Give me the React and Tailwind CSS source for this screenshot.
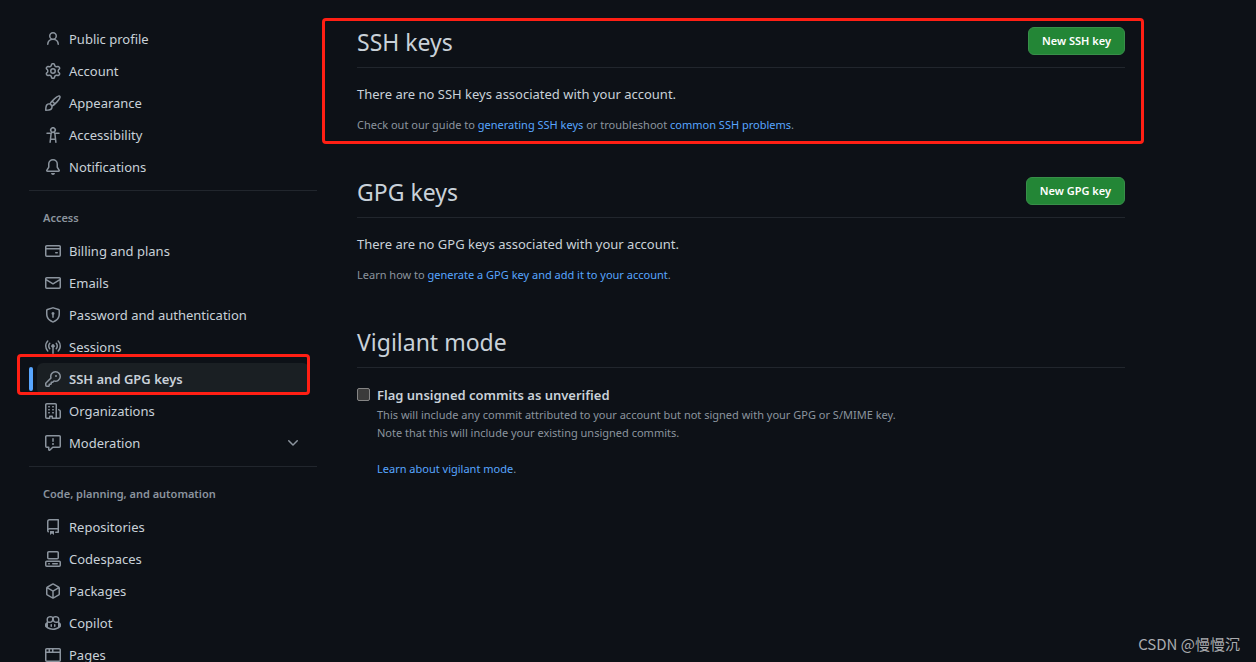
import { useState } from "react";

// 16px outline icons, keyed by name
const ICONS = {
  person:
    "M10.561 8.073a6.005 6.005 0 0 1 3.432 5.142.75.75 0 1 1-1.498.07 4.5 4.5 0 0 0-8.99 0 .75.75 0 0 1-1.498-.07 6.004 6.004 0 0 1 3.431-5.142 3.999 3.999 0 1 1 5.123 0ZM10.5 5a2.5 2.5 0 1 0-5 0 2.5 2.5 0 0 0 5 0Z",
  gear: "M8 0a8.2 8.2 0 0 1 .701.031C9.444.095 9.99.645 10.16 1.29l.288 1.107c.018.066.079.158.212.224.231.114.454.243.668.386.123.082.233.09.299.071l1.103-.303c.644-.176 1.392.021 1.82.63.27.385.506.792.704 1.218.315.675.111 1.422-.364 1.891l-.814.806c-.049.048-.098.147-.088.294.016.257.016.515 0 .772-.01.147.038.246.088.294l.814.806c.475.469.679 1.216.364 1.891a7.977 7.977 0 0 1-.704 1.217c-.428.61-1.176.807-1.82.63l-1.102-.302c-.067-.019-.177-.011-.3.071a5.909 5.909 0 0 1-.668.386c-.133.066-.194.158-.211.224l-.29 1.106c-.168.646-.715 1.196-1.458 1.26a8.006 8.006 0 0 1-1.402 0c-.743-.064-1.289-.614-1.458-1.26l-.289-1.106c-.018-.066-.079-.158-.212-.224a5.738 5.738 0 0 1-.668-.386c-.123-.082-.233-.09-.299-.071l-1.103.303c-.644.176-1.392-.021-1.82-.63a8.12 8.12 0 0 1-.704-1.218c-.315-.675-.111-1.422.363-1.891l.815-.806c.05-.048.098-.147.088-.294a6.214 6.214 0 0 1 0-.772c.01-.147-.038-.246-.088-.294l-.815-.806C.635 6.045.431 5.298.746 4.623a7.92 7.92 0 0 1 .704-1.217c.428-.61 1.176-.807 1.82-.63l1.102.302c.067.019.177.011.3-.071.214-.143.437-.272.668-.386.133-.066.194-.158.211-.224l.29-1.106C6.009.645 6.556.095 7.299.03 7.53.01 7.764 0 8 0Zm-.571 1.525c-.036.003-.108.036-.137.146l-.289 1.105c-.147.561-.549.967-.998 1.189-.173.086-.34.183-.5.29-.417.278-.97.423-1.529.27l-1.103-.303c-.109-.03-.175.016-.195.045-.22.312-.412.644-.573.99-.014.031-.021.11.059.19l.815.806c.411.406.562.957.53 1.456a4.709 4.709 0 0 0 0 .582c.032.499-.119 1.05-.53 1.456l-.815.806c-.081.08-.073.159-.059.19.162.346.353.677.573.989.02.03.085.076.195.046l1.102-.303c.56-.153 1.113-.008 1.53.27.161.107.328.204.501.29.447.222.85.629.997 1.189l.289 1.105c.029.109.101.143.137.146a6.6 6.6 0 0 0 1.142 0c.036-.003.108-.036.137-.146l.289-1.105c.147-.561.549-.967.998-1.189.173-.086.34-.183.5-.29.417-.278.97-.423 1.529-.27l1.103.303c.109.029.175-.016.195-.045.22-.313.411-.644.573-.99.014-.031.021-.11-.059-.19l-.815-.806c-.411-.406-.562-.957-.53-1.456a4.709 4.709 0 0 0 0-.582c-.032-.499.119-1.05.53-1.456l.815-.806c.081-.08.073-.159.059-.19a6.464 6.464 0 0 0-.573-.989c-.02-.03-.085-.076-.195-.046l-1.102.303c-.56.153-1.113.008-1.53-.27a4.44 4.44 0 0 0-.501-.29c-.447-.222-.85-.629-.997-1.189l-.289-1.105c-.029-.11-.101-.143-.137-.146a6.6 6.6 0 0 0-1.142 0ZM11 8a3 3 0 1 1-6 0 3 3 0 0 1 6 0ZM9.5 8a1.5 1.5 0 1 0-3.001.001A1.5 1.5 0 0 0 9.5 8Z",
  paintbrush:
    "M11.134 1.535c.7-.509 1.416-.942 2.076-1.155.649-.21 1.463-.267 2.069.34.603.601.568 1.411.368 2.07-.202.668-.624 1.39-1.125 2.096-1.011 1.424-2.496 2.987-3.775 4.249-1.098 1.084-2.132 1.839-3.04 2.3a3.744 3.744 0 0 1-1.055 3.217c-.431.431-1.065.691-1.657.861-.614.177-1.294.287-1.914.357A21.151 21.151 0 0 1 .797 16H.743A.75.75 0 0 1 0 15.257v-.054a21.25 21.25 0 0 1 .13-2.284c.067-.647.187-1.287.358-1.914.17-.591.43-1.226.86-1.657a3.746 3.746 0 0 1 3.227-1.054c.466-.893 1.225-1.907 2.314-2.982 1.271-1.255 2.833-2.75 4.245-3.777ZM1.62 13.089c-.051.464-.086.929-.104 1.395.466-.018.932-.053 1.396-.104a10.511 10.511 0 0 0 1.668-.309c.526-.151.856-.325 1.011-.48a2.25 2.25 0 1 0-3.182-3.182c-.155.155-.329.485-.48 1.01a10.515 10.515 0 0 0-.309 1.67Zm10.396-10.34c-1.224.89-2.605 2.189-3.822 3.384l1.718 1.718c1.21-1.205 2.51-2.597 3.387-3.833.47-.662.78-1.227.912-1.662.134-.444.032-.551.009-.575h-.001V1.78c-.014-.014-.113-.113-.548.027-.432.14-.995.462-1.655.942Zm-4.832 7.266-.001.001a9.859 9.859 0 0 0 1.63-1.142L7.155 7.216a9.7 9.7 0 0 0-1.161 1.607c.482.302.889.71 1.19 1.192Z",
  accessibility:
    "M9.923 5.302c.063.063.122.129.178.198H14A.75.75 0 0 1 14 7h-3.3l.578 5.163.362 2.997a.75.75 0 0 1-1.49.18L9.868 13H6.132l-.282 2.34a.75.75 0 0 1-1.49-.18l.362-2.997L5.3 7H2a.75.75 0 0 1 0-1.5h3.9a2.54 2.54 0 0 1 .176-.198 3 3 0 1 1 3.847 0ZM9.2 7.073h-.001a1.206 1.206 0 0 0-2.398 0L6.305 11.5h3.39ZM9.5 3a1.5 1.5 0 1 0-3.001.001A1.5 1.5 0 0 0 9.5 3Z",
  bell: "M8 16a2 2 0 0 0 1.985-1.75c.017-.137-.097-.25-.235-.25h-3.5c-.138 0-.252.113-.235.25A2 2 0 0 0 8 16ZM3 5a5 5 0 0 1 10 0v2.947c0 .05.015.098.042.139l1.703 2.555A1.519 1.519 0 0 1 13.482 13H2.518a1.516 1.516 0 0 1-1.263-2.36l1.703-2.554A.255.255 0 0 0 3 7.947Zm5-3.5A3.5 3.5 0 0 0 4.5 5v2.947c0 .346-.102.683-.294.97l-1.703 2.556a.017.017 0 0 0-.003.01l.001.006c0 .002.002.004.004.006l.006.004.007.001h10.964l.007-.001.006-.004.004-.006.001-.007a.017.017 0 0 0-.003-.01l-1.703-2.554a1.745 1.745 0 0 1-.294-.97V5A3.5 3.5 0 0 0 8 1.5Z",
  creditCard:
    "M10.75 9a.75.75 0 0 0 0 1.5h1.5a.75.75 0 0 0 0-1.5h-1.5ZM0 3.75C0 2.784.784 2 1.75 2h12.5c.966 0 1.75.784 1.75 1.75v8.5A1.75 1.75 0 0 1 14.25 14H1.75A1.75 1.75 0 0 1 0 12.25ZM14.5 6.5h-13v5.75c0 .138.112.25.25.25h12.5a.25.25 0 0 0 .25-.25Zm0-2.75a.25.25 0 0 0-.25-.25H1.75a.25.25 0 0 0-.25.25V5h13Z",
  mail: "M1.75 2h12.5c.966 0 1.75.784 1.75 1.75v8.5A1.75 1.75 0 0 1 14.25 14H1.75A1.75 1.75 0 0 1 0 12.25v-8.5C0 2.784.784 2 1.75 2ZM1.5 12.251c0 .138.112.25.25.25h12.5a.25.25 0 0 0 .25-.25V5.809L8.38 9.397a.75.75 0 0 1-.76 0L1.5 5.809v6.442Zm13-8.181v-.32a.25.25 0 0 0-.25-.25H1.75a.25.25 0 0 0-.25.25v.32L8 7.88Z",
  shieldLock:
    "m8.533.133 5.25 1.68A1.75 1.75 0 0 1 15 3.48V7c0 1.566-.32 3.182-1.303 4.682-.983 1.498-2.585 2.813-5.032 3.855a1.697 1.697 0 0 1-1.33 0c-2.447-1.042-4.049-2.357-5.032-3.855C1.32 10.182 1 8.566 1 7V3.48a1.75 1.75 0 0 1 1.217-1.667l5.25-1.68a1.748 1.748 0 0 1 1.066 0Zm-.61 1.429.001.001-5.25 1.68a.251.251 0 0 0-.174.237V7c0 1.36.275 2.666 1.057 3.859.784 1.194 2.121 2.342 4.366 3.298a.196.196 0 0 0 .154 0c2.245-.957 3.582-2.103 4.366-3.297C13.225 9.666 13.5 8.358 13.5 7V3.48a.25.25 0 0 0-.174-.238l-5.25-1.68a.25.25 0 0 0-.153 0ZM9.5 6.5c0 .536-.286 1.032-.75 1.3v2.45a.75.75 0 0 1-1.5 0V7.8A1.5 1.5 0 1 1 9.5 6.5Z",
  broadcast:
    "M8.75 8.582v5.668a.75.75 0 0 1-1.5 0V8.582a1.75 1.75 0 1 1 1.5 0Zm3.983-7.125a.75.75 0 0 1 1.06.026A7.976 7.976 0 0 1 16 7c0 2.139-.84 4.083-2.207 5.517a.75.75 0 1 1-1.086-1.034A6.474 6.474 0 0 0 14.5 7a6.474 6.474 0 0 0-1.793-4.483.75.75 0 0 1 .026-1.06Zm-9.466 0c.3.286.312.76.026 1.06A6.474 6.474 0 0 0 1.5 7a6.47 6.47 0 0 0 1.793 4.483.75.75 0 0 1-1.086 1.034A7.973 7.973 0 0 1 0 7c0-2.139.84-4.083 2.207-5.517a.75.75 0 0 1 1.06-.026Zm8.556 2.321A4.988 4.988 0 0 1 13 7a4.988 4.988 0 0 1-1.177 3.222.75.75 0 1 1-1.146-.967A3.487 3.487 0 0 0 11.5 7c0-.86-.309-1.645-.823-2.255a.75.75 0 0 1 1.146-.967Zm-6.492.958A3.48 3.48 0 0 0 4.5 7a3.48 3.48 0 0 0 .823 2.255.75.75 0 0 1-1.146.967A4.981 4.981 0 0 1 3 7a4.982 4.982 0 0 1 1.188-3.236.75.75 0 1 1 1.143.972Z",
  key: "M10.5 0a5.499 5.499 0 1 1-1.288 10.848l-.932.932a.749.749 0 0 1-.53.22H7v.75a.749.749 0 0 1-.22.53l-.5.5a.749.749 0 0 1-.53.22H5v.75a.749.749 0 0 1-.22.53l-.5.5a.749.749 0 0 1-.53.22h-2A1.75 1.75 0 0 1 0 14.25v-2c0-.199.079-.389.22-.53l4.932-4.932A5.5 5.5 0 0 1 10.5 0Zm-4 5.5c-.001.431.069.86.205 1.269a.75.75 0 0 1-.181.768L1.5 12.56v1.69c0 .138.112.25.25.25h1.69l.06-.06v-1.19a.75.75 0 0 1 .75-.75h1.19l.06-.06v-1.19a.75.75 0 0 1 .75-.75h1.19l1.023-1.025a.75.75 0 0 1 .768-.18A4 4 0 1 0 6.5 5.5ZM11 6a1 1 0 1 1 0-2 1 1 0 0 1 0 2Z",
  organization:
    "M1.75 16A1.75 1.75 0 0 1 0 14.25V1.75C0 .784.784 0 1.75 0h8.5C11.216 0 12 .784 12 1.75v12.5c0 .085-.006.168-.018.25h2.268a.25.25 0 0 0 .25-.25V8.285a.25.25 0 0 0-.111-.208l-1.055-.703a.749.749 0 1 1 .832-1.248l1.055.703c.487.325.779.871.779 1.456v5.965A1.75 1.75 0 0 1 14.25 16h-3.5a.766.766 0 0 1-.197-.026c-.099.017-.2.026-.303.026h-3a.75.75 0 0 1-.75-.75V14h-1v1.25a.75.75 0 0 1-.75.75Zm-.25-1.75c0 .138.112.25.25.25H4v-1.25a.75.75 0 0 1 .75-.75h2.5a.75.75 0 0 1 .75.75v1.25h2.25a.25.25 0 0 0 .25-.25V1.75a.25.25 0 0 0-.25-.25h-8.5a.25.25 0 0 0-.25.25ZM3.75 6h.5a.75.75 0 0 1 0 1.5h-.5a.75.75 0 0 1 0-1.5ZM3 3.75A.75.75 0 0 1 3.75 3h.5a.75.75 0 0 1 0 1.5h-.5A.75.75 0 0 1 3 3.75Zm4 3A.75.75 0 0 1 7.75 6h.5a.75.75 0 0 1 0 1.5h-.5A.75.75 0 0 1 7 6.75ZM7.75 3h.5a.75.75 0 0 1 0 1.5h-.5a.75.75 0 0 1 0-1.5ZM3 9.75A.75.75 0 0 1 3.75 9h.5a.75.75 0 0 1 0 1.5h-.5A.75.75 0 0 1 3 9.75ZM7.75 9h.5a.75.75 0 0 1 0 1.5h-.5a.75.75 0 0 1 0-1.5Z",
  report:
    "M0 1.75C0 .784.784 0 1.75 0h12.5C15.216 0 16 .784 16 1.75v9.5A1.75 1.75 0 0 1 14.25 13H8.06l-2.573 2.573A1.458 1.458 0 0 1 3 14.543V13H1.75A1.75 1.75 0 0 1 0 11.25Zm1.75-.25a.25.25 0 0 0-.25.25v9.5c0 .138.112.25.25.25h2a.75.75 0 0 1 .75.75v2.19l2.72-2.72a.749.749 0 0 1 .53-.22h6.5a.25.25 0 0 0 .25-.25v-9.5a.25.25 0 0 0-.25-.25Zm7 2.25v2.5a.75.75 0 0 1-1.5 0v-2.5a.75.75 0 0 1 1.5 0ZM9 9a1 1 0 1 1-2 0 1 1 0 0 1 2 0Z",
  repo: "M2 2.5A2.5 2.5 0 0 1 4.5 0h8.75a.75.75 0 0 1 .75.75v12.5a.75.75 0 0 1-.75.75h-2.5a.75.75 0 0 1 0-1.5h1.75v-2h-8a1 1 0 0 0-.714 1.7.75.75 0 1 1-1.072 1.05A2.495 2.495 0 0 1 2 11.5Zm10.5-1h-8a1 1 0 0 0-1 1v6.708A2.486 2.486 0 0 1 4.5 9h8ZM5 12.25a.25.25 0 0 1 .25-.25h3.5a.25.25 0 0 1 .25.25v3.25a.25.25 0 0 1-.4.2l-1.45-1.087a.249.249 0 0 0-.3 0L5.4 15.7a.25.25 0 0 1-.4-.2Z",
  codespaces:
    "M0 11.25c0-.966.784-1.75 1.75-1.75h12.5c.966 0 1.75.784 1.75 1.75v3A1.75 1.75 0 0 1 14.25 16H1.75A1.75 1.75 0 0 1 0 14.25Zm2-9.5C2 .784 2.784 0 3.75 0h8.5C13.216 0 14 .784 14 1.75v5a1.75 1.75 0 0 1-1.75 1.75h-8.5A1.75 1.75 0 0 1 2 6.75Zm1.75-.25a.25.25 0 0 0-.25.25v5c0 .138.112.25.25.25h8.5a.25.25 0 0 0 .25-.25v-5a.25.25 0 0 0-.25-.25Zm-2 9.5a.25.25 0 0 0-.25.25v3c0 .138.112.25.25.25h12.5a.25.25 0 0 0 .25-.25v-3a.25.25 0 0 0-.25-.25ZM7 12.75a.75.75 0 0 1 .75-.75h4.5a.75.75 0 0 1 0 1.5h-4.5a.75.75 0 0 1-.75-.75Zm-4 0a.75.75 0 0 1 .75-.75h.5a.75.75 0 0 1 0 1.5h-.5a.75.75 0 0 1-.75-.75Z",
  package:
    "m8.878.392 5.25 3.045c.54.314.872.89.872 1.514v6.098a1.75 1.75 0 0 1-.872 1.514l-5.25 3.045a1.75 1.75 0 0 1-1.756 0l-5.25-3.045A1.75 1.75 0 0 1 1 11.049V4.951c0-.624.332-1.201.872-1.514L7.122.392a1.75 1.75 0 0 1 1.756 0ZM7.875 1.69l-4.63 2.685L8 7.133l4.755-2.758-4.63-2.685a.248.248 0 0 0-.25 0ZM2.5 5.677v5.372c0 .09.047.171.125.216l4.625 2.683V8.432Zm6.25 8.271 4.625-2.683a.25.25 0 0 0 .125-.216V5.677L8.75 8.432Z",
  copilot:
    "M7.998 15.035c-4.562 0-7.873-2.914-7.998-3.749V9.338c.085-.628.677-1.686 1.588-2.065.013-.07.024-.143.036-.218.029-.183.06-.384.126-.612-.201-.508-.254-1.084-.254-1.656 0-.87.128-1.769.693-2.484.579-.733 1.494-1.124 2.724-1.261 1.206-.134 2.262.034 2.944.765.05.053.096.108.139.165.044-.057.094-.112.143-.165.682-.731 1.738-.899 2.944-.765 1.23.137 2.145.528 2.724 1.261.566.715.693 1.614.693 2.484 0 .572-.053 1.148-.254 1.656.066.228.098.429.126.612.012.076.024.148.037.218.924.385 1.522 1.471 1.591 2.095v1.872c0 .766-3.351 3.795-8.002 3.795Zm0-1.485c2.28 0 4.584-1.11 5.002-1.433V7.862l-.023-.116c-.49.21-1.075.291-1.727.291-1.146 0-2.059-.327-2.71-.991A3.222 3.222 0 0 1 8 6.303a3.24 3.24 0 0 1-.544.743c-.65.664-1.563.991-2.71.991-.652 0-1.236-.081-1.727-.291l-.023.116v4.255c.419.323 2.722 1.433 5.002 1.433ZM6.762 2.83c-.193-.206-.637-.413-1.682-.297-1.019.113-1.479.404-1.713.7-.247.312-.369.789-.369 1.554 0 .793.129 1.171.308 1.371.162.181.519.379 1.442.379.853 0 1.339-.235 1.638-.54.315-.322.527-.827.617-1.553.117-.935-.037-1.395-.241-1.614Zm4.155-.297c-1.044-.116-1.488.091-1.681.297-.204.219-.359.679-.242 1.614.091.726.303 1.231.618 1.553.299.305.784.54 1.638.54.922 0 1.28-.198 1.442-.379.179-.2.308-.578.308-1.371 0-.765-.123-1.242-.37-1.554-.233-.296-.693-.587-1.713-.7ZM6.25 9.037a.75.75 0 0 1 .75.75v1.501a.75.75 0 0 1-1.5 0V9.787a.75.75 0 0 1 .75-.75Zm4.25.75v1.501a.75.75 0 0 1-1.5 0V9.787a.75.75 0 0 1 1.5 0Z",
  browser:
    "M0 2.75C0 1.784.784 1 1.75 1h12.5c.966 0 1.75.784 1.75 1.75v10.5A1.75 1.75 0 0 1 14.25 15H1.75A1.75 1.75 0 0 1 0 13.25ZM14.5 6h-13v7.25c0 .138.112.25.25.25h12.5a.25.25 0 0 0 .25-.25Zm-6-3.5v2h6V2.75a.25.25 0 0 0-.25-.25ZM5 2.5v2h2v-2Zm-3.25 0a.25.25 0 0 0-.25.25V4.5h2v-2Z",
  chevronDown:
    "M12.78 5.22a.749.749 0 0 1 0 1.06l-4.25 4.25a.749.749 0 0 1-1.06 0L3.22 6.28a.749.749 0 1 1 1.06-1.06L8 8.939l3.72-3.719a.749.749 0 0 1 1.06 0Z",
};

const NAV = [
  {
    items: [
      { icon: "person", label: "Public profile" },
      { icon: "gear", label: "Account" },
      { icon: "paintbrush", label: "Appearance" },
      { icon: "accessibility", label: "Accessibility" },
      { icon: "bell", label: "Notifications" },
    ],
  },
  {
    title: "Access",
    items: [
      { icon: "creditCard", label: "Billing and plans" },
      { icon: "mail", label: "Emails" },
      { icon: "shieldLock", label: "Password and authentication" },
      { icon: "broadcast", label: "Sessions" },
      { icon: "key", label: "SSH and GPG keys", active: true },
      { icon: "organization", label: "Organizations" },
      { icon: "report", label: "Moderation", expandable: true },
    ],
  },
  {
    title: "Code, planning, and automation",
    items: [
      { icon: "repo", label: "Repositories" },
      { icon: "codespaces", label: "Codespaces" },
      { icon: "package", label: "Packages" },
      { icon: "copilot", label: "Copilot" },
      { icon: "browser", label: "Pages" },
    ],
  },
];

function Icon({ name }) {
  return (
    <svg viewBox="0 0 16 16" className="h-4 w-4 shrink-0 fill-[#8b949e]" aria-hidden="true">
      <path fillRule="evenodd" d={ICONS[name]} />
    </svg>
  );
}

function NavItem({ item }) {
  const rowClass = "flex h-8 w-full items-center gap-2 rounded-md px-2 text-left";

  if (item.expandable) {
    return (
      <li className="px-2">
        <button type="button" className={rowClass}>
          <Icon name={item.icon} />
          <span className="flex-1">{item.label}</span>
          <Icon name="chevronDown" />
        </button>
      </li>
    );
  }

  if (item.active) {
    return (
      <li className="relative px-2">
        <span className="absolute top-1 left-0 h-6 w-1 rounded-md bg-[#58a6ff]" />
        <a href="#keys" aria-current="page" className={`${rowClass} bg-[#1a1f23] font-semibold`}>
          <Icon name={item.icon} />
          {item.label}
        </a>
        {/* Red highlight around the current page */}
        <span className="pointer-events-none absolute -top-[9px] right-[7px] bottom-0 -left-3 rounded-sm border-3 border-[#ff1f14]" />
      </li>
    );
  }

  return (
    <li className="px-2">
      <a href="#" className={rowClass}>
        <Icon name={item.icon} />
        {item.label}
      </a>
    </li>
  );
}

function Sidebar() {
  return (
    <nav className="w-72 shrink-0 text-[13px] leading-[21px]" aria-label="Settings">
      {NAV.map((group, index) => (
        <div key={index} className={index > 0 ? "mt-[7px] border-t border-[#21262d]" : ""}>
          {group.title && (
            <h3 className="flex h-11 items-end px-3.5 pb-2 text-[11px] leading-[18px] font-semibold text-[#8b949e]">
              {group.title}
            </h3>
          )}
          <ul>
            {group.items.map((item) => (
              <NavItem key={item.label} item={item} />
            ))}
          </ul>
        </div>
      ))}
    </nav>
  );
}

function SectionHeader({ title, action }) {
  return (
    <div className="mb-4 flex items-start justify-between border-b border-[#21262d] pb-1.5">
      <h2 className="text-[23px] leading-[38px]">{title}</h2>
      {action && (
        <button
          type="button"
          className="mt-1 h-7 rounded-md border border-[#388f49] bg-[#238636] px-[13px] text-[11px] font-semibold text-white"
        >
          {action}
        </button>
      )}
    </div>
  );
}

function Link({ children }) {
  return (
    <a href="#" className="text-[#58a6ff]">
      {children}
    </a>
  );
}

function App() {
  const [flagUnsigned, setFlagUnsigned] = useState(false);

  return (
    <div className="relative h-screen overflow-hidden bg-[#0d1117] font-['Segoe_UI','Noto_Sans',sans-serif] text-[#c9d1d9]">
      <div className="flex gap-10 pt-[23px] pr-8 pl-[29px]">
        <Sidebar />

        <main className="flex max-w-3xl flex-1 flex-col gap-[38px]">
          <section className="relative">
            <SectionHeader title="SSH keys" action="New SSH key" />
            <p className="mb-2.5 text-[13px] leading-[21px]">There are no SSH keys associated with your account.</p>
            <p className="text-[11px] leading-5 text-[#8b949e]">
              Check out our guide to <Link>generating SSH keys</Link> or troubleshoot <Link>common SSH problems</Link>.
            </p>
            {/* Red highlight around the SSH section */}
            <div className="pointer-events-none absolute -top-[5px] -right-[19px] -bottom-[9px] -left-[35px] rounded-sm border-3 border-[#ff1f14]" />
          </section>

          <section>
            <SectionHeader title="GPG keys" action="New GPG key" />
            <p className="mb-2.5 text-[13px] leading-[21px]">There are no GPG keys associated with your account.</p>
            <p className="text-[11px] leading-5 text-[#8b949e]">
              Learn how to <Link>generate a GPG key and add it to your account</Link>.
            </p>
          </section>

          <section>
            <SectionHeader title="Vigilant mode" />
            <div className="flex items-start gap-[7px]">
              <input
                id="flag-unsigned"
                type="checkbox"
                checked={flagUnsigned}
                onChange={(e) => setFlagUnsigned(e.target.checked)}
                className="mt-1 h-[13px] w-[13px] shrink-0 appearance-none rounded-xs border border-[#858585] bg-[#3b3b3b] checked:bg-[#58a6ff]"
              />
              <div className="text-[11px] leading-[18px] text-[#8b949e]">
                <label htmlFor="flag-unsigned" className="block text-[13px] leading-[22px] font-semibold text-[#c9d1d9]">
                  Flag unsigned commits as unverified
                </label>
                <p>
                  This will include any commit attributed to your account but not signed with your GPG or S/MIME key.
                  <br />
                  Note that this will include your existing unsigned commits.
                </p>
                <p className="mt-[18px]">
                  <Link>Learn about vigilant mode</Link>.
                </p>
              </div>
            </div>
          </section>
        </main>
      </div>

      <span className="absolute right-4 bottom-2 font-['Noto_Sans_CJK_SC',sans-serif] text-[15px] leading-5 text-[#a9abae]">
        CSDN @慢慢沉
      </span>
    </div>
  );
}

export default App;
